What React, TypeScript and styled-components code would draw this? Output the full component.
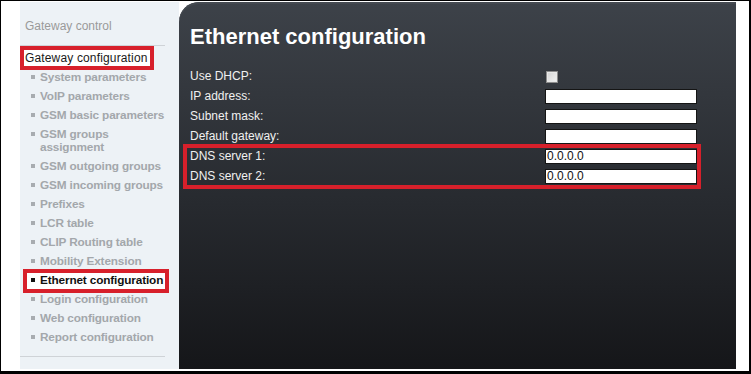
import React from "react";
import styled, { createGlobalStyle } from "styled-components";

const Global = createGlobalStyle`
  html, body { margin: 0; padding: 0; background: #fff; }
  body { font-family: "Liberation Sans", Arial, sans-serif; }
  * { box-sizing: border-box; }
`;

const RED = "#d7202b";

const Frame = styled.div`
  width: 751px;
  height: 374px;
  border-style: solid;
  border-color: #000;
  border-width: 1px 2px 3px 1px;
  background: #fff;
  display: flex;
  padding: 1px 0 0 19px;
  overflow: hidden;
`;

const Sidebar = styled.nav`
  width: 159px;
  height: 367px;
  background: #edf2f6;
  display: flex;
  flex-direction: column;
  padding-top: 17px;
`;

const SideTitle = styled.div`
  font-size: 12px;
  line-height: 14px;
  color: #9a9a9a;
  padding-left: 5px;
`;

const Separator = styled.div<{ $top: number }>`
  width: 145px;
  height: 1px;
  background: #cfd3d7;
  margin-top: ${(p) => p.$top}px;
`;

const SectionHead = styled.div`
  align-self: flex-start;
  display: inline-flex;
  align-items: center;
  height: 24px;
  border: 4px solid ${RED};
  background: #fff;
  padding: 0 2px 0 1px;
  font-size: 12px;
  color: #1a1a1a;
  letter-spacing: 0.15px;
`;

const ItemList = styled.ul`
  list-style: none;
  margin: 1px 0 0 0;
  padding: 0 0 0 11px;
  display: flex;
  flex-direction: column;
  gap: 6px;
`;

const Item = styled.li<{ $active?: boolean }>`
  display: flex;
  align-items: flex-start;
  gap: 5px;
  font-size: 11.8px;
  letter-spacing: -0.15px;
  line-height: 13px;
  font-weight: bold;
  color: ${(p) => (p.$active ? "#111" : "#a3a7ab")};
  ${(p) =>
    p.$active
      ? `
    align-self: flex-start;
    border: 4px solid ${RED};
    background: #fff;
    margin: -5px 0 -6px -8px;
    padding: 1px 2px 2px 4px;
  `
      : ""}
`;

const Bullet = styled.span<{ $active?: boolean }>`
  flex: none;
  width: 4px;
  height: 4px;
  margin-top: 4px;
  background: ${(p) => (p.$active ? "#111" : "#a8acb0")};
`;

const Panel = styled.main`
  width: 557px;
  height: 367px;
  border-top-left-radius: 20px;
  background: linear-gradient(180deg, #3d4249 0%, #33373d 25%, #272a2f 55%, #151619 100%);
  box-shadow: inset 0 2px 0 #454a51;
  padding: 22px 0 0 11px;
  color: #f2f2f2;
`;

const Title = styled.h1`
  margin: 0;
  font-size: 22px;
  line-height: 26px;
  font-weight: bold;
  color: #fff;
`;

const Form = styled.div`
  margin-top: 19px;
  display: flex;
  flex-direction: column;
  gap: 5px;
`;

const Row = styled.div`
  display: grid;
  grid-template-columns: 355px 152px;
  align-items: center;
  height: 15px;
`;

const Label = styled.span`
  font-size: 12px;
  line-height: 15px;
  color: #f0f0f0;
`;

const Input = styled.div`
  width: 152px;
  height: 15px;
  background: #fff;
  border: 1px solid #151515;
  font-size: 12px;
  line-height: 13px;
  color: #111;
  padding-left: 1px;
`;

const Check = styled.span`
  width: 12px;
  height: 12px;
  margin-left: 1px;
  border: 1px solid #8d8d8d;
  background: linear-gradient(135deg, #d4d4d4, #f4f4f4);
  box-shadow: inset 0 0 0 1px #e8e8e8;
`;

const Highlight = styled.div`
  align-self: flex-start;
  margin: -5px 0 0 -7px;
  border: 4px solid ${RED};
  padding: 1px 0 1px 3px;
  display: flex;
  flex-direction: column;
  gap: 5px;
`;

const items: { label: string[]; active?: boolean }[] = [
  { label: ["System parameters"] },
  { label: ["VoIP parameters"] },
  { label: ["GSM basic parameters"] },
  { label: ["GSM groups", "assignment"] },
  { label: ["GSM outgoing groups"] },
  { label: ["GSM incoming groups"] },
  { label: ["Prefixes"] },
  { label: ["LCR table"] },
  { label: ["CLIP Routing table"] },
  { label: ["Mobility Extension"] },
  { label: ["Ethernet configuration"], active: true },
  { label: ["Login configuration"] },
  { label: ["Web configuration"] },
  { label: ["Report configuration"] },
];

export default function App() {
  return (
    <>
      <Global />
      <Frame>
        <Sidebar>
          <SideTitle>Gateway control</SideTitle>
          <Separator $top={12} />
          <SectionHead>Gateway configuration</SectionHead>
          <ItemList>
            {items.map((it) => (
              <Item key={it.label.join(" ")} $active={it.active}>
                <Bullet $active={it.active} />
                <span>
                  {it.label.map((l, i) => (
                    <React.Fragment key={l}>
                      {i > 0 && <br />}
                      {l}
                    </React.Fragment>
                  ))}
                </span>
              </Item>
            ))}
          </ItemList>
          <Separator $top={12} />
        </Sidebar>
        <Panel>
          <Title>Ethernet configuration</Title>
          <Form>
            <Row>
              <Label>Use DHCP:</Label>
              <Check />
            </Row>
            <Row>
              <Label>IP address:</Label>
              <Input />
            </Row>
            <Row>
              <Label>Subnet mask:</Label>
              <Input />
            </Row>
            <Row>
              <Label>Default gateway:</Label>
              <Input />
            </Row>
            <Highlight>
              <Row>
                <Label>DNS server 1:</Label>
                <Input>0.0.0.0</Input>
              </Row>
              <Row>
                <Label>DNS server 2:</Label>
                <Input>0.0.0.0</Input>
              </Row>
            </Highlight>
          </Form>
        </Panel>
      </Frame>
    </>
  );
}
